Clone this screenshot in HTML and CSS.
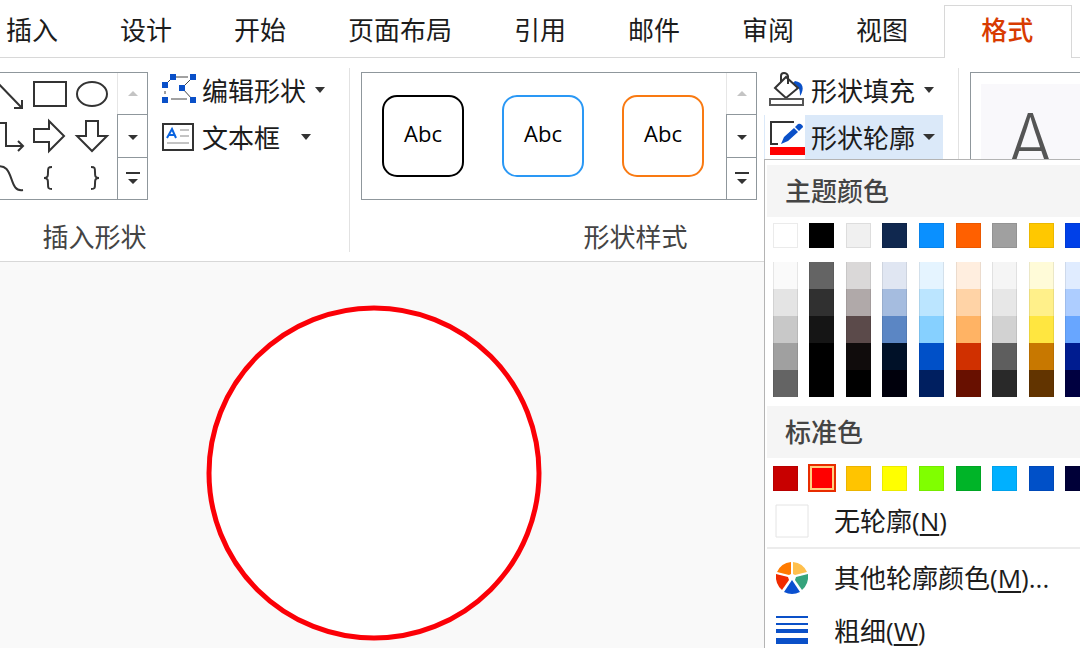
FILE: index.html
```html
<!DOCTYPE html>
<html lang="zh-CN">
<head>
  <meta charset="UTF-8">
  <title>形状格式</title>
  <link rel="stylesheet" href="styles.css">
</head>
<body>
  <nav class="tabs">
    <button class="tab">插入</button>
    <button class="tab">设计</button>
    <button class="tab">开始</button>
    <button class="tab">页面布局</button>
    <button class="tab">引用</button>
    <button class="tab">邮件</button>
    <button class="tab">审阅</button>
    <button class="tab">视图</button>
    <button class="tab active">格式</button>
  </nav>

  <div class="ribbon">
    <section class="group group-insert">
      <div class="group-body">
        <div class="gallery">
          <div class="shapes">
            <button class="shape" aria-label="箭头"><svg width="42" height="42" viewBox="0 0 42 42"><path d="M8 7L34 34M35 27v8h-8"/></svg></button>
            <button class="shape" aria-label="矩形"><svg width="42" height="42" viewBox="0 0 42 42"><path d="M5 9h32v24H5z"/></svg></button>
            <button class="shape" aria-label="椭圆"><svg width="42" height="42" viewBox="0 0 42 42"><ellipse cx="21" cy="21" rx="15" ry="12"/></svg></button>
            <button class="shape" aria-label="肘形箭头"><svg width="42" height="42" viewBox="0 0 42 42"><path d="M8 8h11v23h17M31 26l5 5-5 5"/></svg></button>
            <button class="shape" aria-label="右箭头"><svg width="42" height="42" viewBox="0 0 42 42"><path d="M5 14h15V6l15 15-15 15v-9H5z"/></svg></button>
            <button class="shape" aria-label="下箭头"><svg width="42" height="42" viewBox="0 0 42 42"><path d="M15 6h12v15h9L21 36 6 21h9z"/></svg></button>
            <button class="shape" aria-label="曲线"><svg width="42" height="42" viewBox="0 0 42 42"><path d="M8 10C29 4 20 36 36 33"/></svg></button>
            <button class="shape" aria-label="左大括号"><svg width="42" height="42" viewBox="0 0 42 42"><path d="M23 10c-4 0-4 1-4 5 0 4 0 6-4 6 4 0 4 2 4 6s0 5 4 5"/></svg></button>
            <button class="shape" aria-label="右大括号"><svg width="42" height="42" viewBox="0 0 42 42"><path d="M20 10c4 0 4 1 4 5 0 4 0 6 4 6-4 0-4 2-4 6s0 5-4 5"/></svg></button>
          </div>
          <div class="scroller">
            <button class="scroll off" aria-label="上一行"><svg width="16" height="16" viewBox="0 0 16 16"><path d="M3 10l5-5 5 5z"/></svg></button>
            <button class="scroll" aria-label="下一行"><svg width="16" height="16" viewBox="0 0 16 16"><path d="M3 7h10l-5 5z"/></svg></button>
            <button class="scroll" aria-label="更多"><svg width="16" height="16" viewBox="0 0 16 16"><path d="M1 2h14v2H1zM3 9h10l-5 5z"/></svg></button>
          </div>
        </div>
        <div class="commands">
          <button class="command">
            <svg width="34" height="34" viewBox="0 0 34 34">
              <path d="M11 4L3 12M14 4h12M31 4L20 15l11 12M9 26h16M3 18v3" fill="none" stroke="#444"/>
              <path fill="#0a50c8" d="M8 1h6v6H8zM28 1h6v6h-6zM0 9h6v6H0zM17 12h6v6h-6zM0 24h6v6H0zM28 24h6v6h-6z"/>
            </svg>
            <span>编辑形状</span>
            <svg class="caret" width="12" height="8" viewBox="0 0 12 8"><path d="M1 1h10L6 7z"/></svg>
          </button>
          <button class="command command-text">
            <svg width="34" height="34" viewBox="0 0 34 34">
              <path d="M1 4h30v26H1z" fill="#fff" stroke="#333" stroke-width="2"/>
              <path d="M5 18l5-9 4 9M7 15h6" fill="none" stroke="#0a64e0" stroke-width="2"/>
              <path d="M18 10h9M18 16h9M5 23h22" stroke="#888"/>
            </svg>
            <span>文本框</span>
            <svg class="caret" width="12" height="8" viewBox="0 0 12 8"><path d="M1 1h10L6 7z"/></svg>
          </button>
        </div>
      </div>
      <p class="group-name">插入形状</p>
    </section>

    <section class="group group-style">
      <div class="group-body">
        <div class="gallery">
          <div class="presets">
            <button class="preset">Abc</button>
            <button class="preset blue">Abc</button>
            <button class="preset orange">Abc</button>
          </div>
          <div class="scroller">
            <button class="scroll off" aria-label="上一行"><svg width="16" height="16" viewBox="0 0 16 16"><path d="M3 10l5-5 5 5z"/></svg></button>
            <button class="scroll" aria-label="下一行"><svg width="16" height="16" viewBox="0 0 16 16"><path d="M3 7h10l-5 5z"/></svg></button>
            <button class="scroll" aria-label="更多"><svg width="16" height="16" viewBox="0 0 16 16"><path d="M1 2h14v2H1zM3 9h10l-5 5z"/></svg></button>
          </div>
        </div>
        <div class="commands">
          <button class="command">
            <svg width="36" height="36" viewBox="0 0 36 36">
              <path d="M26 9c8 1 10 8 5 15 0-7-1-9-7-13z" fill="#0a50c8"/>
              <path d="M6 16L17 5l12 11-12 10z" fill="#fff" stroke="#333" stroke-width="2"/>
              <path d="M12 10V4q0-3 3-3t4 3v8" fill="none" stroke="#333" stroke-width="2"/>
              <path d="M1 27h33v6H1z" fill="#fff" stroke="#555" stroke-width="2"/>
            </svg>
            <span>形状填充</span>
            <svg class="caret" width="12" height="8" viewBox="0 0 12 8"><path d="M1 1h10L6 7z"/></svg>
          </button>
          <div class="dropdown">
            <button class="command open">
              <svg width="40" height="44" viewBox="-5 -4 40 44">
                <path d="M24 3H1v22h7" fill="none" stroke="#333" stroke-width="2"/>
                <path d="M14 18l10-9 4 4-10 9-7 3zM25 8l3-3q2-1 4 1t0 3l-3 3z" fill="#0a50c8"/>
                <path d="M0 28h35v8H0z" fill="#f00"/>
              </svg>
              <span>形状轮廓</span>
              <svg class="caret" width="12" height="8" viewBox="0 0 12 8"><path d="M0 1h12L6 7z"/></svg>
            </button>
            <div class="menu">
              <h2 class="menu-title">主题颜色</h2>
              <div class="colors theme" id="theme"></div>
              <div class="colors tints" id="tints"></div>
              <h2 class="menu-title">标准色</h2>
              <div class="colors standard" id="standard"></div>
              <button class="item">
                <svg width="34" height="34" viewBox="0 0 34 34"><path d="M1 1h32v32H1z" fill="#fff" stroke="#e4e4e4"/></svg>
                <span>无轮廓(<u>N</u>)</span>
              </button>
              <hr class="line">
              <button class="item">
                <svg width="34" height="34" viewBox="-17 -17 34 34">
                  <path fill="#ff7a00" d="M-1-4V-16Q-11-15-15-6L-3-3z"/>
                  <path fill="#ffc04d" d="M1-4V-16Q11-15 15-6L3-3z"/>
                  <path fill="#f02a00" d="M-4-1L-16-4Q-17 6-10 12L-3 2z"/>
                  <path fill="#35a37c" d="M4-1L16-4Q17 6 10 12L3 2z"/>
                  <path fill="#0a50d0" d="M0 2L8 14Q0 18-8 14z"/>
                </svg>
                <span>其他轮廓颜色(<u>M</u>)...</span>
              </button>
              <button class="item">
                <svg width="34" height="34" viewBox="0 0 34 34"><path fill="#0a50c8" d="M1 2h32v2H1zM1 9h32v2H1zM1 15h32v4H1zM1 24h32v6H1z"/></svg>
                <span>粗细(<u>W</u>)</span>
              </button>
            </div>
          </div>
        </div>
      </div>
      <p class="group-name">形状样式</p>
    </section>

    <section class="group group-art">
      <div class="gallery">
        <button class="wordart">A</button>
      </div>
    </section>
  </div>

  <main class="canvas">
    <svg class="circle" width="336" height="336" viewBox="0 0 336 336">
      <circle cx="168" cy="168" r="165" fill="#fff" stroke="#fb0007" stroke-width="5"/>
    </svg>
  </main>

  <script>
    const theme = ['#ffffff', '#000000', '#f0f0f0', '#10284f', '#0a90ff', '#ff6000', '#a0a0a0', '#ffc800', '#0040e8'];
    const tints = [
      ['#fafafa', '#646464', '#dad8d8', '#e0e6f2', '#e5f4ff', '#ffeedf', '#f5f5f5', '#fffbd8', '#e0ecff'],
      ['#e4e4e4', '#303030', '#b0a9a9', '#a5bcdf', '#bbe5ff', '#ffd3a6', '#e7e7e7', '#fff08a', '#adcdff'],
      ['#c8c8c8', '#151515', '#5b4a4a', '#5b86c4', '#86d0ff', '#ffb364', '#d2d2d2', '#ffe640', '#68a6ff'],
      ['#a0a0a0', '#000000', '#100c0c', '#001128', '#0050c8', '#d03000', '#5e5e5e', '#c87800', '#001c90'],
      ['#646464', '#000000', '#000000', '#00000c', '#001f60', '#681000', '#292929', '#623400', '#000040']
    ];
    const standard = ['#c80000', '#ff0000', '#ffc400', '#ffff00', '#80ff00', '#00b428', '#00b0ff', '#0050c8', '#000038'];

    function fill(id, colors, selected) {
      const box = document.getElementById(id);
      colors.forEach((color) => {
        const swatch = document.createElement('button');
        swatch.className = color === selected ? 'swatch selected' : 'swatch';
        swatch.style.backgroundColor = color;
        swatch.setAttribute('aria-label', color);
        box.appendChild(swatch);
      });
    }

    fill('theme', theme);
    fill('tints', tints.flat());
    fill('standard', standard, '#ff0000');
  </script>
</body>
</html>
```
FILE: styles.css
```css
* {
  box-sizing: border-box;
}
body {
  margin: 0;
  min-height: 100vh;
  display: flex;
  flex-direction: column;
  overflow: hidden;
  font-family: "Open Sans", "Noto Sans CJK SC", sans-serif;
  font-size: 26px;
  color: #1c1c1c;
  background-color: #fff;
}
button {
  flex: none;
  margin: 0;
  padding: 0;
  border: none;
  background: none;
  font: inherit;
  color: inherit;
  white-space: nowrap;
  cursor: pointer;
}
svg {
  display: block;
  flex: none;
}

/* tabs */
.tabs {
  display: flex;
  gap: 62px;
  height: 58px;
  padding: 5px 0 0 6px;
  border-bottom: 1px solid #d8d8d8;
}
.tab {
  height: 50px;
  line-height: 46px;
}
.tab.active {
  height: 53px;
  margin-left: -26px;
  padding: 0 38px 4px 36px;
  border: 1px solid #d8d8d8;
  border-bottom: none;
  background-color: #fff;
  color: #d83b01;
  font-weight: 500;
}

/* ribbon */
.ribbon {
  display: flex;
  padding: 10px 0 9px;
  border-bottom: 1px solid #d8d8d8;
}
.group {
  flex: none;
  border-right: 1px solid #e2e2e2;
}
.group-insert {
  width: 350px;
}
.group-style {
  width: 609px;
  padding-left: 11px;
}
.group-art {
  flex: 1;
  padding-left: 11px;
  border-right: none;
}
.group-body {
  display: flex;
}
.group-name {
  margin: 22px 0 0;
  line-height: 30px;
  text-align: center;
  color: #444;
}
.group-insert .group-name {
  padding-right: 160px;
}
.group-style .group-name {
  padding-right: 48px;
}
.gallery {
  display: flex;
  height: 128px;
  margin-top: 4px;
  border: 1px solid #8f979c;
  background-color: #fff;
}
.group-insert .gallery {
  width: 148px;
  border-left: none;
  overflow: hidden;
}
.shapes {
  flex: 1;
  min-width: 0;
  display: grid;
  grid-template-columns: repeat(3, 42px);
  justify-content: end;
  padding-right: 4px;
}
.shape path,
.shape ellipse {
  fill: none;
  stroke: #333;
  stroke-width: 2;
}
.scroller {
  flex: none;
  display: flex;
  flex-direction: column;
  width: 30px;
}
.scroll {
  flex: 1;
  display: flex;
  align-items: center;
  justify-content: center;
  border-left: 1px solid #8f979c;
  border-top: 1px solid #8f979c;
  fill: #333;
}
.scroll.off {
  border-top: none;
  border-left-color: #e6e6e6;
  fill: #c4c4c4;
}
.presets {
  display: flex;
  align-items: center;
  gap: 38px;
  padding: 0 22px 0 20px;
}
.preset {
  width: 82px;
  height: 82px;
  padding-bottom: 6px;
  border: 2px solid #000;
  border-radius: 15px;
  font-size: 22px;
  color: #000;
}
.preset.blue {
  border-color: #2a98f5;
}
.preset.orange {
  border-color: #f97a12;
}

/* commands */
.commands {
  display: flex;
  flex-direction: column;
  gap: 3px;
}
.group-insert .commands {
  padding-left: 14px;
}
.group-style .commands {
  padding-left: 7px;
}
.command {
  display: flex;
  align-items: center;
  gap: 6px;
  height: 44px;
}
.command .caret {
  margin-left: 2px;
  fill: #333;
}
.command-text .caret {
  margin-left: 14px;
}
.group-style .command {
  width: 179px;
  padding-left: 5px;
}
.group-style .command.open {
  padding-left: 1px;
  background-color: #dbe9f9;
}
.command.open svg:first-child {
  background-color: #fff;
}

/* outline menu */
.dropdown {
  position: relative;
}
.menu {
  position: absolute;
  top: 100%;
  left: 0;
  width: calc(100vw - 764px);
  padding: 5px 0 0 2px;
  border: 1px solid #b4b4b4;
  border-right: none;
  background-color: #fff;
  overflow: hidden;
}
.menu-title {
  margin: 0;
  padding-left: 18px;
  line-height: 52px;
  font-size: 26px;
  font-weight: 500;
  color: #444;
  background-color: #f5f5f5;
}
.colors {
  display: grid;
  grid-template-columns: repeat(9, 1fr);
  justify-items: center;
  width: 329px;
}
.swatch {
  width: 25px;
  height: 25px;
  border: 1px solid rgba(0, 0, 0, 0.08);
}
.theme {
  padding: 6px 0 14px;
}
.tints {
  padding-bottom: 9px;
}
.tints .swatch {
  height: 27px;
  border-width: 0 1px;
}
.standard {
  align-items: center;
  padding: 6px 0 2px;
}
.swatch.selected {
  width: 28px;
  height: 28px;
  border: 2px solid #e82c00;
  box-shadow: inset 0 0 0 2px #ffd080;
}
.item {
  display: flex;
  align-items: center;
  gap: 25px;
  width: 100%;
  height: 53px;
  padding-left: 8px;
  line-height: 30px;
  text-align: left;
}
.item u {
  text-decoration-thickness: 2px;
  text-underline-offset: 3px;
}
.line {
  margin: 0 0 2px;
  border: none;
  border-top: 2px solid #ececec;
}

/* text effects */
.group-art .gallery {
  padding: 11px 0 0 10px;
  border-right: none;
}
.wordart {
  flex: 1;
  height: 104px;
  background-color: #f9f8fb;
  font-family: "Noto Sans CJK SC", sans-serif;
  font-size: 78px;
  font-weight: 300;
  line-height: 90px;
  color: #555;
}

/* document */
.canvas {
  flex: 1;
  padding: 43px 0 0 206px;
  background-color: #f9f9f9;
}
```
